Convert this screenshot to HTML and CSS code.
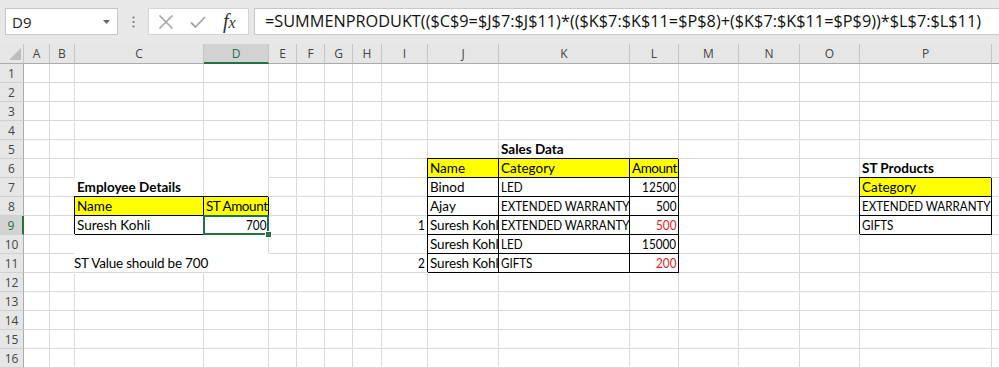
FILE: index.html
```
<!DOCTYPE html>
<html>
<head>
<meta charset="utf-8">
<link rel="stylesheet" href="styles.css">
</head>
<body>
<div class="bar">
  <div class="namebox"><span>D9</span><svg class="dd" width="7" height="4" viewBox="0 0 7 4"><path d="M0 0h7L3.5 4z" fill="#666"/></svg></div>
  <div class="grip"><svg width="3" height="12" viewBox="0 0 3 12"><circle cx="1.5" cy="1.5" r="1.1" fill="#777"/><circle cx="1.5" cy="6" r="1.1" fill="#777"/><circle cx="1.5" cy="10.5" r="1.1" fill="#777"/></svg></div>
  <div class="fxbox">
    <svg class="ic" width="16" height="14" viewBox="0 0 16 14"><path d="M1.5 0.5L14.5 13.5M14.5 0.5L1.5 13.5" stroke="#a4a4a4" stroke-width="1.6" fill="none"/></svg>
    <svg class="ic" width="16" height="12" viewBox="0 0 16 12"><path d="M1 6.5L5.5 11L15 1" stroke="#a4a4a4" stroke-width="1.8" fill="none"/></svg>
    <span class="fx"><i>f</i><i class="x">x</i></span>
  </div>
  <div class="formula">=SUMMENPRODUKT(($C$9=$J$7:$J$11)*(($K$7:$K$11=$P$8)+($K$7:$K$11=$P$9))*$L$7:$L$11)</div>
</div>
<div class="sheet">
  <div class="corner"><svg width="12" height="12" viewBox="0 0 12 12"><path d="M12 0V12H0z" fill="#bdbdbd"/></svg></div><div class="ch">A</div><div class="ch">B</div><div class="ch">C</div><div class="ch csel">D</div><div class="ch">E</div><div class="ch">F</div><div class="ch">G</div><div class="ch">H</div><div class="ch">I</div><div class="ch">J</div><div class="ch">K</div><div class="ch">L</div><div class="ch">M</div><div class="ch">N</div><div class="ch">O</div><div class="ch">P</div><div class="ch"></div>

  <div class="rh">1</div><div></div><div></div><div></div><div></div><div></div><div></div><div></div><div></div><div></div><div></div><div></div><div></div><div></div><div></div><div></div><div></div><div></div>
  <div class="rh">2</div><div></div><div></div><div></div><div></div><div></div><div></div><div></div><div></div><div></div><div></div><div></div><div></div><div></div><div></div><div></div><div></div><div></div>
  <div class="rh">3</div><div></div><div></div><div></div><div></div><div></div><div></div><div></div><div></div><div></div><div></div><div></div><div></div><div></div><div></div><div></div><div></div><div></div>
  <div class="rh">4</div><div></div><div></div><div></div><div></div><div></div><div></div><div></div><div></div><div></div><div></div><div></div><div></div><div></div><div></div><div></div><div></div><div></div>
  <div class="rh">5</div><div></div><div></div><div></div><div></div><div></div><div></div><div></div><div></div><div></div><div></div><div class="b ov">Sales Data</div><div></div><div></div><div></div><div></div><div></div><div></div>
  <div class="rh">6</div><div></div><div></div><div class="nb"></div><div class="nb"></div><div></div><div></div><div></div><div></div><div></div><div class="t y">Name</div><div class="t y">Category</div><div class="t y tight">Amount</div><div></div><div></div><div></div><div class="b">ST Products</div><div></div>
  <div class="rh">7</div><div></div><div class="nr"></div><div class="b">Employee Details</div><div></div><div></div><div></div><div></div><div></div><div></div><div class="t">Binod</div><div class="t k"><span>LED</span></div><div class="t r n"><span>12500</span></div><div></div><div></div><div></div><div class="t y">Category</div><div></div>
  <div class="rh">8</div><div></div><div></div><div class="t y">Name</div><div class="t y tight">ST Amount</div><div></div><div></div><div></div><div></div><div></div><div class="t">Ajay</div><div class="t k"><span>EXTENDED WARRANTY</span></div><div class="t r n"><span>500</span></div><div></div><div></div><div></div><div class="t k"><span>EXTENDED WARRANTY</span></div><div></div>
  <div class="rh rsel">9</div><div></div><div></div><div class="t">Suresh Kohli</div><div class="t r n sel"><span>700</span></div><div></div><div></div><div></div><div></div><div class="r n"><span>1</span></div><div class="t sk">Suresh Kohli</div><div class="t k"><span>EXTENDED WARRANTY</span></div><div class="t r n red"><span>500</span></div><div></div><div></div><div></div><div class="t k"><span>GIFTS</span></div><div></div>
  <div class="rh">10</div><div></div><div class="nr"></div><div class="nr nb"></div><div class="nb"></div><div></div><div></div><div></div><div></div><div></div><div class="t sk">Suresh Kohli</div><div class="t k"><span>LED</span></div><div class="t r n"><span>15000</span></div><div></div><div></div><div></div><div></div><div></div>
  <div class="rh">11</div><div></div><div class="nr"></div><div class="ctr nr"><span>ST Value should be 700</span></div><div class="nr"></div><div></div><div></div><div></div><div></div><div class="r n"><span>2</span></div><div class="t sk">Suresh Kohli</div><div class="t k"><span>GIFTS</span></div><div class="t r n red"><span>200</span></div><div></div><div></div><div></div><div></div><div></div>
  <div class="rh">12</div><div></div><div></div><div></div><div></div><div></div><div></div><div></div><div></div><div></div><div></div><div></div><div></div><div></div><div></div><div></div><div></div><div></div>
  <div class="rh">13</div><div></div><div></div><div></div><div></div><div></div><div></div><div></div><div></div><div></div><div></div><div></div><div></div><div></div><div></div><div></div><div></div><div></div>
  <div class="rh">14</div><div></div><div></div><div></div><div></div><div></div><div></div><div></div><div></div><div></div><div></div><div></div><div></div><div></div><div></div><div></div><div></div><div></div>
  <div class="rh">15</div><div></div><div></div><div></div><div></div><div></div><div></div><div></div><div></div><div></div><div></div><div></div><div></div><div></div><div></div><div></div><div></div><div></div>
  <div class="rh">16</div><div></div><div></div><div></div><div></div><div></div><div></div><div></div><div></div><div></div><div></div><div></div><div></div><div></div><div></div><div></div><div></div><div></div>
</div>
</body>
</html>
```
FILE: styles.css
```
html, body {
  margin: 0;
  padding: 0;
}
body {
  width: 999px;
  height: 368px;
  overflow: hidden;
  background: #fff;
  font-family: "Lato", sans-serif;
}
.bar {
  height: 44px;
  box-sizing: border-box;
  background: #e8e8e8;
  display: flex;
  align-items: flex-start;
  padding-top: 8px;
}
.namebox {
  margin-left: 5px;
  width: 113px;
  height: 27px;
  box-sizing: border-box;
  background: #fff;
  border: 1px solid #c6c6c6;
  display: flex;
  align-items: center;
  justify-content: space-between;
  padding: 0 7px 0 6px;
  font-family: "Open Sans", sans-serif;
  font-size: 15px;
  color: #222;
}
.grip {
  width: 30px;
  height: 27px;
  display: flex;
  align-items: center;
  justify-content: center;
}
.fxbox {
  width: 101px;
  height: 27px;
  box-sizing: border-box;
  background: #fff;
  border: 1px solid #d4d4d4;
  display: flex;
  align-items: center;
  padding-left: 9px;
  gap: 16px;
}
.fx {
  font-family: "Liberation Serif", serif;
  font-size: 20px;
  color: #333;
  margin-left: 1px;
}
.fx .x {
  font-size: 16px;
}
.formula {
  margin-left: 5px;
  flex: 1;
  height: 27px;
  box-sizing: border-box;
  background: #fff;
  border: 1px solid #c6c6c6;
  border-right: none;
  padding-left: 10px;
  font-family: "Open Sans", sans-serif;
  font-size: 16.3px;
  line-height: 25px;
  white-space: nowrap;
  overflow: hidden;
  color: #111;
}
.sheet {
  display: grid;
  grid-template-columns: 24px 26px 25px 129px 65px 28px 28px 28px 29px 46px 71px 131px 49px 60px 61px 60px 132px 40px;
  grid-template-rows: 20px;
  grid-auto-rows: 19px;
}
.sheet > div {
  box-sizing: border-box;
  border-right: 1px solid #d9d9d9;
  border-bottom: 1px solid #d9d9d9;
  padding: 0 2px;
  font-size: 13.5px;
  line-height: 19px;
  white-space: nowrap;
  overflow: hidden;
  color: #000;
}
.sheet > .k > span {
  display: inline-block;
  transform: scaleX(0.86);
  transform-origin: left center;
}
.sheet > .n > span {
  display: inline-block;
  transform: scaleX(0.87);
  transform-origin: right center;
}
.sheet > .tight {
  letter-spacing: -0.45px;
}
.sheet > .sk {
  letter-spacing: -0.15px;
}
.sheet > .corner {
  background: #e6e6e6;
  border-right: 1px solid #c4c4c4;
  border-bottom: 1px solid #ababab;
  display: flex;
  align-items: flex-end;
  justify-content: flex-end;
  padding: 0 2px 3px 0;
}
.sheet > .ch {
  background: #e6e6e6;
  border-right: 1px solid #c4c4c4;
  border-bottom: 1px solid #ababab;
  text-align: center;
  font-family: "Open Sans", sans-serif;
  font-size: 12px;
  line-height: 20px;
  color: #444;
}
.sheet > .csel {
  background: #d2d2d2;
  color: #217346;
  border-bottom: 2px solid #217346;
}
.sheet > .rh {
  background: #e6e6e6;
  border-right: 1px solid #ababab;
  border-bottom: 1px solid #d0d0d0;
  text-align: center;
  font-family: "Open Sans", sans-serif;
  font-size: 12px;
  line-height: 19px;
  color: #444;
  padding: 0;
}
.sheet > .rsel {
  background: #d2d2d2;
  color: #217346;
  border-right: 2px solid #217346;
}
.sheet > .b {
  font-weight: bold;
}
.sheet > .ov {
  overflow: visible;
}
.sheet > .y {
  background: #ffff00;
}
.sheet > .t {
  border-right: 1px solid #000;
  border-bottom: 1px solid #000;
  box-shadow: -1px -1px 0 #000;
}
.sheet > .r {
  text-align: right;
}
.sheet > .red {
  color: #e81c1c;
}
.sheet > .ctr {
  overflow: visible;
  padding: 0;
}
.sheet > .ctr > span {
  display: block;
  margin-left: -1px;
  letter-spacing: -0.2px;
}
.sheet > .nr {
  border-right-color: transparent;
}
.sheet > .nb {
  border-bottom-color: transparent;
}
.sheet > .sel {
  position: relative;
  overflow: visible;
}
.sheet > .sel::after {
  content: "";
  position: absolute;
  left: -1px;
  top: -1px;
  right: -1px;
  bottom: -1px;
  border: 2px solid #217346;
}
.sheet > .sel::before {
  content: "";
  position: absolute;
  right: -4px;
  bottom: -4px;
  width: 5px;
  height: 5px;
  background: #217346;
  border: 1px solid #fff;
  z-index: 1;
}
```
